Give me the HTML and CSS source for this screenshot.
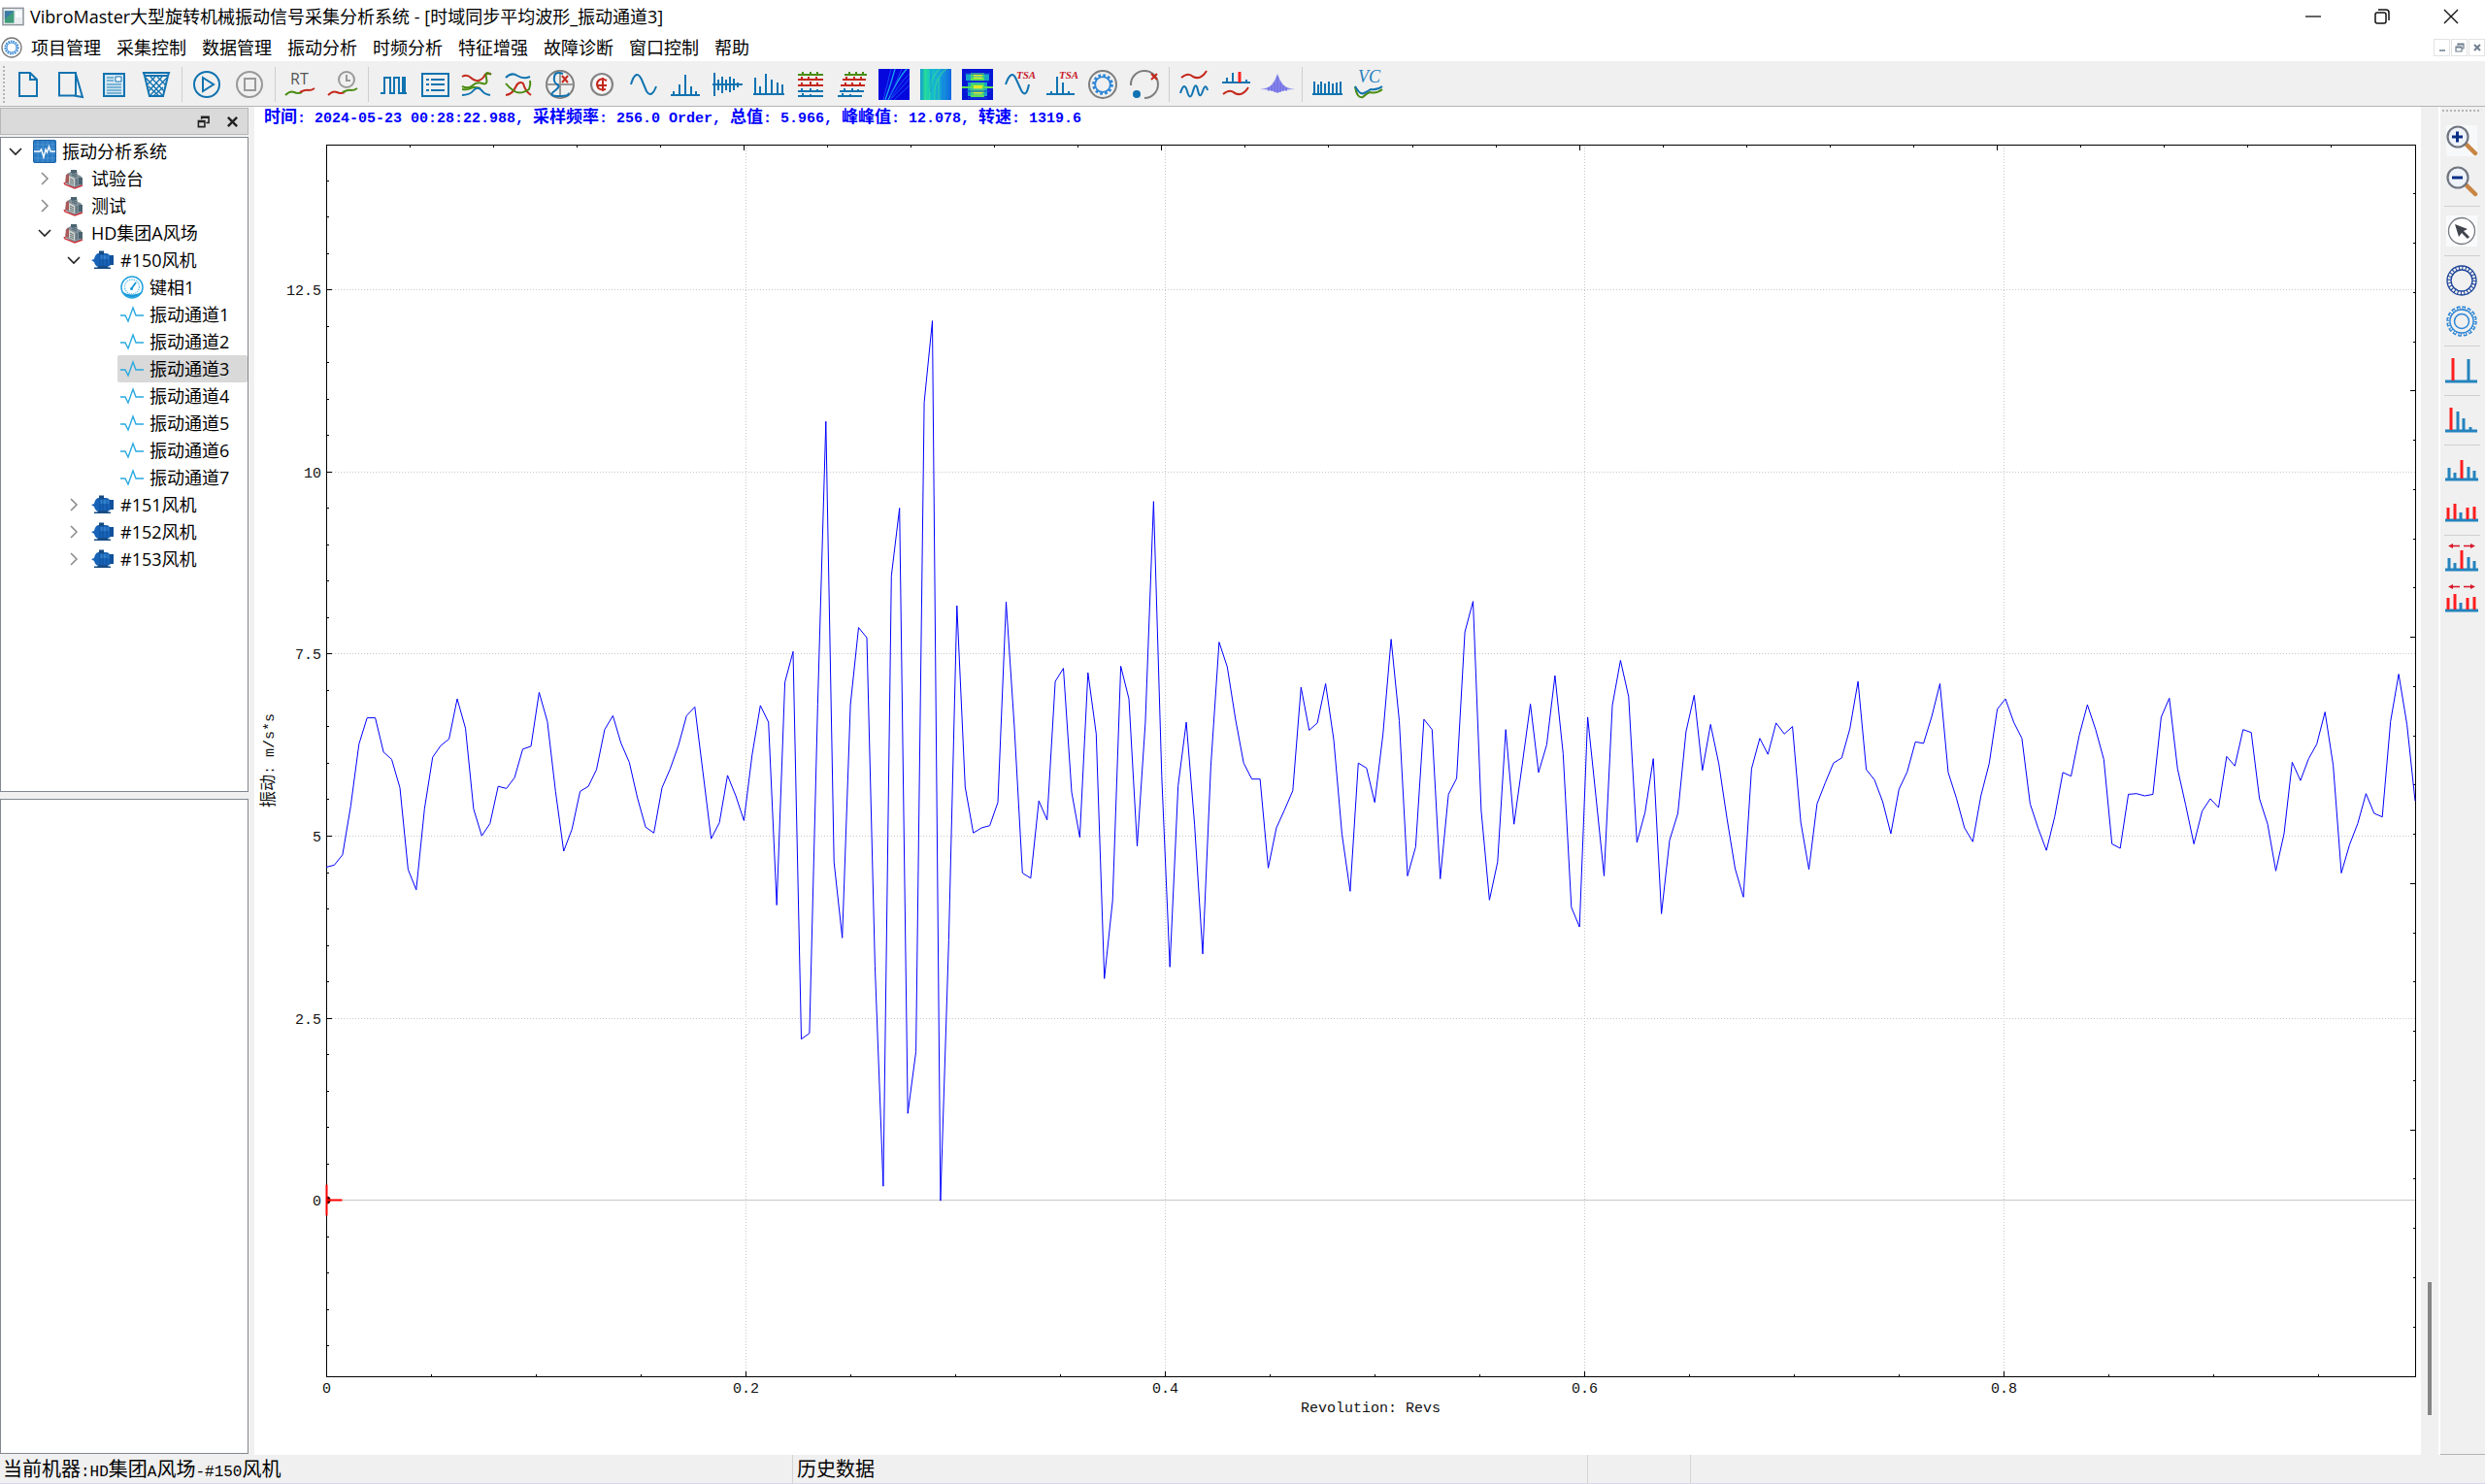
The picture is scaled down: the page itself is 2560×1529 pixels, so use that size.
FILE: index.html
```html
<!DOCTYPE html>
<html lang="zh-CN">
<head>
<meta charset="utf-8">
<title>VibroMaster大型旋转机械振动信号采集分析系统</title>
<link rel="stylesheet" href="styles.css">
</head>
<body>
<svg class="defs" aria-hidden="true">
  <symbol id="i-down" viewBox="0 0 16 16"><path d="M2 5l6 6 6-6" fill="none" stroke="#222" stroke-width="1.6"/></symbol>
  <symbol id="i-right" viewBox="0 0 16 16"><path d="M5 2l6 6-6 6" fill="none" stroke="#8a8a8a" stroke-width="1.5"/></symbol>
  <symbol id="i-system" viewBox="0 0 24 24"><rect width="24" height="24" rx="2" fill="#2b7bc4"/><path d="M0 5h24M0 9h24M0 14h24M0 19h24M5 0v24M10 0v24M15 0v24M20 0v24" stroke="#5b9fd8" stroke-width=".6"/><rect x=".5" y=".5" width="23" height="23" rx="2" fill="none" stroke="#1d62a5"/><path d="M1 12h6l1.500-2 2.500 8 2-8 1.500 3 2-6 1.500 5h5" fill="none" stroke="#fff" stroke-width="1.400"/></symbol>
  <symbol id="i-plant" viewBox="0 0 24 24"><path d="M4 13l1-6 4-2V3h6l1 5 3 1 2 3v7l-8 3-9-5z" fill="#82919a"/><path d="M9 3h6v3H9zM17 11h4v7h-4z" fill="#4b6470"/><path d="M4 8l3-1v9l-4 1z" fill="#a8595a"/><path d="M7 9l6 3v8l-6-3z" fill="#d3d4cc"/><path d="M8 12l4 2M8 14l4 2M8 16l4 2M15 12v7M18 12v6M10 6l5 2M10 8l5 2" stroke="#47606c" stroke-width=".9"/><path d="M2 16l1 2 10 4 8-3" fill="none" stroke="#c9363d" stroke-width="1.400"/></symbol>
  <symbol id="i-motor" viewBox="0 0 24 24"><path d="M0 12l3-1q1-5 4-6h8q3 0 4 2h4v10h-3q-2 2-4 2H7q-3-1-4-5z" fill="#1763b8"/><path d="M8 2.500h5V6H8zM3 19.500h17V21H3z" fill="#174c82"/><path d="M9 7h9v4H9z" fill="#3080cf"/><path d="M19 7h4v10h-4z" fill="#11509a"/><path d="M9 6v12M12 6v12M16 6v12" stroke="#0d478d" stroke-width=".7"/><path d="M6 20l2-2h8l2 2" fill="#164c86"/></symbol>
  <symbol id="i-gauge" viewBox="0 0 24 24"><circle cx="12" cy="12" r="11" fill="#fff" stroke="#22a2dd" stroke-width="1.500"/><path d="M2.500 17a11 11 0 0 0 19 0q-9.500 5-19 0z" fill="#1598d8"/><circle cx="12" cy="11.500" r="7.500" fill="none" stroke="#58bbe6" stroke-width="1.300" stroke-dasharray="1.300 1"/><path d="M16 7l-5 7" stroke="#1598d8" stroke-width="1.800"/><circle cx="11.500" cy="13.500" r="1.500" fill="#1598d8"/></symbol>
  <symbol id="i-wave" viewBox="0 0 24 24"><path d="M0 13h5l3 6 5-14 3 8h8" fill="none" stroke="#27a9e1" stroke-width="1.400"/></symbol>
  <symbol id="i-gear" viewBox="0 0 32 32"><circle cx="16" cy="16" r="12.500" fill="none" stroke="#2f86d6" stroke-width="4" stroke-dasharray="3.545 3"/><circle cx="16" cy="16" r="10.500" fill="#f0f0f0" stroke="#2f86d6" stroke-width="2.500"/></symbol>
</svg>

<header class="titlebar">
  <svg class="app-icon" viewBox="0 0 24 20"><rect x="1" y="1" width="22" height="18" fill="#e9edf0" stroke="#8a9299" stroke-width="1.500"/><path d="M3 4h10v13H3z" fill="#3f9b79"/><path d="M3 4h10l-10 9z" fill="#3c7ba7"/><path d="M15 4h3v7h-3zM19 4h2v7h-2z" fill="#fff"/></svg>
  <h1>VibroMaster大型旋转机械振动信号采集分析系统 - [时域同步平均波形_振动通道3]</h1>
  <div class="window-buttons">
    <button aria-label="最小化"><svg viewBox="0 0 16 16"><path d="M0 8h16" stroke="#111" stroke-width="1.300"/></svg></button>
    <button aria-label="还原"><svg viewBox="0 0 16 16"><rect x="1" y="4" width="11" height="11" rx="2" fill="none" stroke="#111" stroke-width="1.500"/><path d="M4 1h8q3 0 3 3v8" fill="none" stroke="#111" stroke-width="1.500"/></svg></button>
    <button aria-label="关闭"><svg viewBox="0 0 16 16"><path d="M1 1l14 14M15 1L1 15" stroke="#111" stroke-width="1.400"/></svg></button>
  </div>
</header>

<nav class="menubar">
  <svg class="menu-icon" viewBox="0 0 22 22"><circle cx="11" cy="11" r="10" fill="#fff" stroke="#777" stroke-width="1.300"/><circle cx="11" cy="11" r="6.500" fill="none" stroke="#2f86d6" stroke-width="2" stroke-dasharray="1.600 1"/><circle cx="11" cy="11" r="5" fill="none" stroke="#2f86d6"/></svg>
  <button>项目管理</button><button>采集控制</button><button>数据管理</button><button>振动分析</button><button>时频分析</button><button>特征增强</button><button>故障诊断</button><button>窗口控制</button><button>帮助</button>
  <div class="mdi-buttons">
    <button aria-label="最小化子窗口"><svg viewBox="0 0 10 10"><path d="M2 8h6" stroke="#6f7f8f" stroke-width="1.500"/></svg></button>
    <button aria-label="还原子窗口"><svg viewBox="0 0 10 10"><path d="M3 3V1h6v5H7M1 4h6v5H1zM1 5h6M3 2h6" fill="none" stroke="#6f7f8f" stroke-width="1.200"/></svg></button>
    <button aria-label="关闭子窗口"><svg viewBox="0 0 10 10"><path d="M2 2l6 6M8 2L2 8" stroke="#6f7f8f" stroke-width="2"/></svg></button>
  </div>
</nav>

<div class="toolbar" role="toolbar">
  <span class="handle"></span>
  <div class="group wide">
    <button aria-label="新建"><svg viewBox="0 0 32 32"><path class="b" d="M7 4h11l7 7v17H7zM18 4v7h7"/></svg></button>
    <button aria-label="打开"><svg viewBox="0 0 32 32"><path class="b" d="M4 4h17v23.500H4zM21 5l7 24-9-1.500"/></svg></button>
    <button aria-label="保存"><svg viewBox="0 0 32 32"><path d="M6 5h21v23H6z" fill="#d3e6f2" stroke="#1173b0" stroke-width="2"/><path d="M9 9h7M9 12h7M9 16h15M9 19h15M9 22h15M9 25h15" stroke="#5ea3cc" stroke-width="1.300"/><path d="M18 8h6v5h-6z" fill="#fff" stroke="#1173b0"/></svg></button>
    <button aria-label="删除"><svg viewBox="0 0 32 32"><path class="b" d="M3 4h26l-1 3H4zM4 7l5 21h14l5-21"/><path d="M5 9l17 18M10 8l14 15M17 8l9 9M27 9L10 27M22 8L8 23M15 8l-9 9M13 28l10-9M19 28l-11-10" stroke="#1173b0" stroke-width="1.300"/></svg></button>
  </div>
  <span class="sep"></span>
  <div class="group wide">
    <button aria-label="开始"><svg viewBox="0 0 32 32"><circle class="b" cx="16" cy="16" r="13"/><path class="b" d="M12 9l11 7-11 7z"/></svg></button>
    <button aria-label="停止"><svg viewBox="0 0 32 32"><circle class="k" cx="16" cy="16" r="13"/><path class="k" d="M11 10h11v12H11z"/></svg></button>
  </div>
  <span class="sep"></span>
  <div class="group wide">
    <button aria-label="实时"><svg viewBox="0 0 32 32"><text x="6" y="16" class="rt">RT</text><path class="g" d="M1 27q5-5 9-3 4 2 8 0"/><path class="r" d="M16 24q6-3 9-2 3 0 6-2"/></svg></button>
    <button aria-label="历史"><svg viewBox="0 0 32 32"><circle class="k" cx="20" cy="11" r="8"/><path class="k" d="M20 6v6h4"/><path class="r" d="M1 27q5-5 9-3 4 2 8 0"/><path class="g" d="M16 24q6-3 9-2 3 0 6-2"/></svg></button>
  </div>
  <span class="sep"></span>
  <div class="group">
    <button aria-label="转速脉冲"><svg viewBox="0 0 32 32"><path class="b" d="M3 25h4V9h6v16h4V9h5v16h4V9h2v16h2"/></svg></button>
    <button aria-label="数据列表"><svg viewBox="0 0 32 32"><path class="b" d="M3 5h27v23H3z"/><path class="b" d="M7 11h3M12 11h14M7 16h3M12 16h14M7 22h3M12 22h14"/></svg></button>
    <button aria-label="趋势"><svg viewBox="0 0 32 32"><path class="r" d="M1 8q5-3 9 1t8 3q5-2 6-5t7-2"/><path class="g" d="M1 18q7 3 11-1t10-2 4-6 5-3"/><path class="g" d="M1 21q6 1 9-1t10 0"/><path class="b" d="M1 27q8 0 12-5t9 1q2 3 8 4"/></svg></button>
    <button aria-label="多趋势"><svg viewBox="0 0 32 32"><path class="b" d="M3 9q6-6 12-2t13 1"/><path class="r" d="M3 27q7-1 10-8t8-4q2 8 8 12"/><path class="g" d="M3 15q3 4 9 8t15-2q2-5 1-9"/></svg></button>
    <button aria-label="轴心轨迹"><svg viewBox="0 0 32 32"><circle class="k dark" cx="16" cy="16" r="14"/><path class="k" d="M2 16h28M16 2v28"/><path class="b" d="M19 5q-8-3-9 3t3 8-3 7 5 5 9-3"/><path class="r" d="M18 7l6 7M24 7l-6 7"/></svg></button>
    <button aria-label="极坐标"><svg viewBox="0 0 32 32"><circle cx="16" cy="16" r="11" fill="#f7f7f7" stroke="#858585" stroke-width="2.200"/><path class="r" d="M21 12q-8-4-10 3 0 8 9 6M11 17h10M17 9v14"/></svg></button>
    <button aria-label="时域波形"><svg viewBox="0 0 32 32"><path class="b" d="M3 16Q8-1 14 11L19 23Q24 31 29 18"/></svg></button>
    <button aria-label="频谱"><svg viewBox="0 0 32 32"><path class="b" d="M1 27h30M4 27v-4M10 27V16M16 27V6M22 27v-9M27 27v-4"/></svg></button>
    <button aria-label="包络波形"><svg viewBox="0 0 32 32"><path class="b" d="M1 16h31M3 4v24M7 11v11M11 8v17M15 11v11M19 8v16M23 10v12M27 14v5"/></svg></button>
    <button aria-label="包络谱"><svg viewBox="0 0 32 32"><path class="b" d="M0 26h32M2 26V9M7 26v-8M13 26V5M19 26V11M25 26V14M30 26V16"/></svg></button>
    <button aria-label="瀑布图"><svg viewBox="0 0 32 32"><path class="g" d="M3 6h26M8 6V3M16 6V3M23 6V3"/><path class="r" d="M3 11h26M7 11V8M14 11V8M22 11V8M3 17h26M7 17v-3M16 17v-4M23 17v-3"/><path class="b" d="M3 23h26M7 23v-3M16 23v-3M23 23v-2M3 28h26M8 28v-3M16 28v-2"/></svg></button>
    <button aria-label="级联图"><svg viewBox="0 0 32 32"><path class="g" d="M8 6h23M13 6V3M20 6V3M27 6V3"/><path class="r" d="M6 11h24M10 11V8M18 11V8M25 11V8M4 17h25M9 17v-3M16 17v-3M24 17v-3"/><path class="b" d="M3 23h25M8 23v-3M16 23v-3M22 23v-2M1 28h25M6 28v-3M14 28v-2"/></svg></button>
    <button aria-label="时频图"><svg viewBox="0 0 32 32"><path fill="#0507dc" d="M0 0h32v32H0z"/><path d="M7 32Q13 15 17 0M10 32Q20 10 29 0" stroke="#16aef2" stroke-width="1.200" fill="none"/><path d="M5 32L13 0M12 28L24 0M14 30L32 10M16 32L32 17M12 32Q22 14 32 5" stroke="#164df5" fill="none"/></svg></button>
    <button aria-label="小波时频图"><svg viewBox="0 0 32 32"><defs><linearGradient id="heat"><stop stop-color="#139bd0"/><stop offset=".18" stop-color="#22d9a0"/><stop offset=".36" stop-color="#15bfc9"/><stop offset=".65" stop-color="#17a1d9"/><stop offset="1" stop-color="#1068df"/></linearGradient></defs><path fill="url(#heat)" d="M0 0h32v32H0z"/><path d="M5 0v32M15 32Q13 10 27 0M9 32Q10 8 20 0M19 32V8" stroke="#3ce58c" stroke-width="1.200" fill="none" opacity=".6"/><path d="M11 0v24M23 8v24M29 6v26" stroke="#1079e8" opacity=".6"/></svg></button>
    <button aria-label="阶次时频图"><svg viewBox="0 0 32 32"><path fill="#0716d5" d="M0 0h32v32H0z"/><path fill="#17a3c7" d="M4 5h24v7H4zM6 14h20v14H6z"/><path fill="#5add58" d="M9 4h14v8H9zM9 14h14v15H9zM0 18h32v2H0z"/><path fill="#e3ea25" d="M12 6h9v4h-9zM12 17h9v4h-9zM12 24h9v3h-9z"/><path d="M3 5h26M5 13h23M4 23h25M6 30h20" stroke="#1546dd"/><path d="M7 8h19M8 15h17M7 21h18M9 26h14" stroke="#18b4c6"/></svg></button>
    <button aria-label="时域同步平均波形"><svg viewBox="0 0 32 32"><path class="b" d="M2 16Q8-1 13 11L18 22Q23 31 26 16"/><text x="13" y="10" class="tsa">TSA</text></svg></button>
    <button aria-label="时域同步平均频谱"><svg viewBox="0 0 32 32"><path class="b" d="M1 26h29M6 26v-3M12 26V8M18 26V14M24 26v-3"/><text x="14" y="10" class="tsa">TSA</text></svg></button>
    <button aria-label="齿轮诊断"><svg viewBox="0 0 32 32"><circle class="k dark" cx="16" cy="16" r="14"/><use href="#i-gear" x="4" y="4" width="24" height="24"/></svg></button>
    <button aria-label="轴承诊断"><svg viewBox="0 0 32 32"><path class="k dark" d="M2 17A14 14 0 1 1 16 30"/><circle cx="8" cy="26" r="4" fill="#1173b0"/><path class="r" d="M23 5l6 6M29 5l-6 6"/></svg></button>
  </div>
  <span class="sep"></span>
  <div class="group">
    <button aria-label="相关分析"><svg viewBox="0 0 32 32"><path class="r" d="M3 9q7-6 12-1 8 4 14-6"/><path class="b" d="M2 25Q6 12 9 23T15 23 20 22 25 23 30 22"/></svg></button>
    <button aria-label="倒频谱"><svg viewBox="0 0 32 32"><path class="b" d="M2 14h29M7 14V9M13 14V4M27 14v-3"/><path d="M20 14V3" stroke="#f22" stroke-width="3"/><path class="r" d="M3 26q7-6 12-1 8 4 14-6"/></svg></button>
    <button aria-label="概率密度"><svg viewBox="0 0 32 32"><path d="M-2 21q10-1 13-6 3-4 5-10 2 6 5 10 3 5 13 6-12 0-18 4-6-4-18-4z" fill="#8a89ea"/><path d="M7 19v4M10 17v6M13 14v10M16 8v16M19 14v10M22 17v6M25 19v4" stroke="#6463e2"/></svg></button>
  </div>
  <span class="sep"></span>
  <div class="group">
    <button aria-label="倍频程"><svg viewBox="0 0 32 32"><path class="b" d="M1 26h31M3 26V13M7 26V16M10 26V13M14 26V15M18 26V13M22 26V15M26 26V14M30 26V13"/></svg></button>
    <button aria-label="振动标准"><svg viewBox="0 0 32 32"><text x="5" y="14" class="vc">VC</text><path class="g" d="M2 18q2 13 8 11 4-4 7-5 7 2 13-3"/><path class="b" d="M2 18q5 9 9 7t7-4q7 1 12-3"/></svg></button>
  </div>
</div>

<main class="workspace">
  <aside class="sidebar">
    <div class="dock-title">
      <button aria-label="浮动"><svg viewBox="0 0 14 14"><path d="M5 4V1.500h8V8h-3M1.500 6h7v6.500h-7zM1.500 7h7M5 2.500h8" fill="none" stroke="#222" stroke-width="1.700"/></svg></button>
      <button aria-label="关闭面板"><svg viewBox="0 0 14 14"><path d="M2 2l10 10M12 2L2 12" stroke="#222" stroke-width="2.600"/></svg></button>
    </div>
    <div class="panel">
      <ul class="tree" role="tree">
        <li><div class="row"><svg class="chev"><use href="#i-down"/></svg><span class="label"><svg><use href="#i-system"/></svg>振动分析系统</span></div>
          <ul>
            <li><div class="row"><svg class="chev"><use href="#i-right"/></svg><span class="label"><svg><use href="#i-plant"/></svg>试验台</span></div></li>
            <li><div class="row"><svg class="chev"><use href="#i-right"/></svg><span class="label"><svg><use href="#i-plant"/></svg>测试</span></div></li>
            <li><div class="row"><svg class="chev"><use href="#i-down"/></svg><span class="label"><svg><use href="#i-plant"/></svg>HD集团A风场</span></div>
              <ul>
                <li><div class="row"><svg class="chev"><use href="#i-down"/></svg><span class="label"><svg><use href="#i-motor"/></svg>#150风机</span></div>
                  <ul>
                    <li><div class="row leaf"><span class="label"><svg><use href="#i-gauge"/></svg>键相1</span></div></li>
                    <li><div class="row leaf"><span class="label"><svg><use href="#i-wave"/></svg>振动通道1</span></div></li>
                    <li><div class="row leaf"><span class="label"><svg><use href="#i-wave"/></svg>振动通道2</span></div></li>
                    <li><div class="row leaf"><span class="label selected"><svg><use href="#i-wave"/></svg>振动通道3</span></div></li>
                    <li><div class="row leaf"><span class="label"><svg><use href="#i-wave"/></svg>振动通道4</span></div></li>
                    <li><div class="row leaf"><span class="label"><svg><use href="#i-wave"/></svg>振动通道5</span></div></li>
                    <li><div class="row leaf"><span class="label"><svg><use href="#i-wave"/></svg>振动通道6</span></div></li>
                    <li><div class="row leaf"><span class="label"><svg><use href="#i-wave"/></svg>振动通道7</span></div></li>
                  </ul>
                </li>
                <li><div class="row"><svg class="chev"><use href="#i-right"/></svg><span class="label"><svg><use href="#i-motor"/></svg>#151风机</span></div></li>
                <li><div class="row"><svg class="chev"><use href="#i-right"/></svg><span class="label"><svg><use href="#i-motor"/></svg>#152风机</span></div></li>
                <li><div class="row"><svg class="chev"><use href="#i-right"/></svg><span class="label"><svg><use href="#i-motor"/></svg>#153风机</span></div></li>
              </ul>
            </li>
          </ul>
        </li>
      </ul>
    </div>
    <div class="panel"></div>
  </aside>

  <section class="chart">
    <p class="readout"><span class="cn">时间</span>: 2024-05-23 00:28:22.988, <span class="cn">采样频率</span>: 256.0 Order, <span class="cn">总值</span>: 5.966, <span class="cn">峰峰值</span>: 12.078, <span class="cn">转速</span>: 1319.6</p>
    <div class="plot"><svg id="plot"></svg></div>
  </section>

  <div class="gutter"><span class="thumb"></span></div>

  <div class="side-tools" role="toolbar">
    <span class="handle-h"></span>
    <button aria-label="放大"><svg viewBox="0 0 32 32"><path fill="#f7f8fa" d="M0 0h32v32H0z"/><path d="M21 20l9 9" stroke="#c98544" stroke-width="4.500" stroke-linecap="round"/><circle cx="12" cy="12" r="10.500" fill="#eef3fa" stroke="#70757f" stroke-width="2.200"/><path d="M6 12h11M11.500 6.500v11" stroke="#062f86" stroke-width="3"/></svg></button>
    <button aria-label="缩小"><svg viewBox="0 0 32 32"><path d="M21 20l9 9" stroke="#c98544" stroke-width="4.500" stroke-linecap="round"/><circle cx="12" cy="12" r="10.500" fill="#eef3fa" stroke="#70757f" stroke-width="2.200"/><path d="M6 12h11" stroke="#062f86" stroke-width="3"/></svg></button>
    <span class="sep-h"></span>
    <button aria-label="选择"><svg viewBox="0 0 32 32"><path fill="#f9fafc" d="M0 0h32v32H0z"/><circle cx="16" cy="16" r="13.500" fill="#fff" stroke="#777a80" stroke-width="1.300"/><path d="M9 9l13 5-4 2 6 6-2 2-6-6-3 4z" fill="#3f444c"/></svg></button>
    <span class="sep-h"></span>
    <button aria-label="轴承游标"><svg viewBox="0 0 32 32"><circle cx="16" cy="16" r="15" fill="none" stroke="#1b4398" stroke-width="1.300"/><circle cx="16" cy="16" r="11" fill="none" stroke="#1b4398" stroke-width="1.300"/><circle cx="16" cy="16" r="13" fill="none" stroke="#1b4398" stroke-width="4" stroke-dasharray="1 2.403"/></svg></button>
    <button aria-label="齿轮游标"><svg viewBox="0 0 32 32"><circle cx="16" cy="16" r="14" fill="none" stroke="#2b85d4" stroke-width="3.500" stroke-dasharray="3.500 1.998"/><circle cx="16" cy="16" r="13.300" fill="none" stroke="#f0f0f0" stroke-width="2" stroke-dasharray="1.500 3.723" stroke-dashoffset="-1"/><circle cx="16" cy="16" r="12" fill="#f0f0f0" stroke="#2b85d4" stroke-width="1.300"/><circle cx="16" cy="16" r="7.500" fill="none" stroke="#2b85d4" stroke-width="1.500"/></svg></button>
    <span class="sep-h"></span>
    <button aria-label="单游标"><svg viewBox="0 0 32 32"><path class="s" d="M-1 27h33M23 27V4"/><path class="h" d="M7 26V3"/></svg></button>
    <span class="sep-h"></span>
    <button aria-label="谐波游标"><svg viewBox="0 0 32 32"><path class="s" d="M-1 27h33M12 27V7M18 27V14M25 27v-4"/><path class="h" d="M5 26V3"/></svg></button>
    <span class="sep-h"></span>
    <button aria-label="边带游标"><svg viewBox="0 0 32 32"><path class="s" d="M-1 26h34M3 26V14M9 26v-7M23 26V13M29 26V17"/><path class="h" d="M16 25V6"/></svg></button>
    <button aria-label="边带组游标"><svg viewBox="0 0 32 32"><path class="s" d="M-1 26h34M15 26v-8"/><path class="h" d="M2 25V13M9 25V9M22 25V13M29 25V12"/></svg></button>
    <span class="sep-h"></span>
    <button aria-label="移动边带"><svg viewBox="0 0 32 32"><path class="s" d="M-1 26h34M3 26V14M9 26v-7M23 26V13M29 26V17"/><path class="h" d="M16 25V6"/><path d="M2 1.500l5-2.500v1.700h7v1.600H7V4zM30 1.500L25-1v1.700h-7v1.600h7V4z" fill="#d8172a"/></svg></button>
    <button aria-label="移动边带组"><svg viewBox="0 0 32 32"><path class="s" d="M-1 26h34M15 26v-8"/><path class="h" d="M2 25V13M9 25V9M22 25V13M29 25V12"/><path d="M2 1.500l5-2.500v1.700h7v1.600H7V4zM30 1.500L25-1v1.700h-7v1.600h7V4z" fill="#d8172a"/></svg></button>
  </div>
</main>

<footer class="statusbar">
  <span class="machine"><span class="cn">当前机器</span>:HD<span class="cn">集团</span>A<span class="cn">风场</span>-#150<span class="cn">风机</span></span>
  <span class="source"><span class="cn">历史数据</span></span>
  <span class="cell"></span>
  <span class="cell"></span>
</footer>
<script src="chart.js"></script>
</body>
</html>
```

FILE: styles.css
```css
* { box-sizing: border-box; }

body {
  margin: 0;
  height: 100vh;
  display: flex;
  flex-direction: column;
  background: #f0f0f0;
  color: #000;
  font: 18px/28px "Open Sans", "Noto Sans CJK SC", sans-serif;
  overflow: hidden;
}

button {
  padding: 0;
  border: 0;
  background: none;
  color: inherit;
  font: inherit;
  display: flex;
  align-items: center;
  justify-content: center;
}

ul { list-style: none; margin: 0; padding: 0; }

.defs { display: none; }

/* title bar */
.titlebar {
  flex: none;
  height: 34px;
  display: flex;
  align-items: center;
  background: #fff;
  padding-left: 2px;
}
.app-icon { width: 23px; height: 20px; margin-right: 6px; }
.titlebar h1 {
  flex: 1;
  margin: 0;
  font-size: 18px;
  font-weight: 400;
  white-space: nowrap;
}
.window-buttons { display: flex; }
.window-buttons button { width: 71px; height: 34px; }
.window-buttons svg { width: 16px; height: 16px; }

/* menu bar */
.menubar {
  flex: none;
  height: 29px;
  display: flex;
  align-items: center;
  gap: 16px;
  background: #fff;
  padding-left: 1px;
}
.menu-icon { width: 22px; height: 22px; margin-right: -7px; }
.mdi-buttons { margin-left: auto; display: flex; gap: 1px; }
.mdi-buttons button {
  width: 17px;
  height: 18px;
  border: 1px solid #e2e2e2;
}
.mdi-buttons svg { width: 10px; height: 10px; }

/* main toolbar */
.toolbar {
  flex: none;
  height: 47px;
  display: flex;
  align-items: center;
  padding-top: 2px;
  border-bottom: 1px solid #b4b4b4;
}
.handle {
  width: 2px;
  height: 38px;
  margin: 0 2px 0 3px;
  background: repeating-linear-gradient(#b4b4b4 0 2px, transparent 2px 4px);
}
.group { display: flex; }
.group button { width: 43px; height: 42px; }
.group.wide button { width: 44px; }
.group svg, .side-tools svg { width: 32px; height: 32px; overflow: visible; }
.sep {
  width: 8px;
  height: 36px;
  background: linear-gradient(#cfcfcf, #cfcfcf) center / 1px 100% no-repeat;
}

.b, .r, .g, .k { fill: none; stroke-width: 2; }
.b { stroke: #1173b0; }
.r { stroke: #c5281c; }
.g { stroke: #4a8c12; }
.k { stroke: #999; }
.k.dark { stroke: #7d7d7d; }
.s { fill: none; stroke: #2583bd; stroke-width: 3; }
.h { fill: none; stroke: #ff1e1e; stroke-width: 3; }
.rt { font: 16px "Open Sans", sans-serif; fill: #555; }
.tsa { font: italic bold 11px "Liberation Serif", serif; fill: #c8202c; }
.vc { font: italic 18px "Liberation Serif", serif; fill: #1f80bd; }

/* workspace */
.workspace { flex: 1; min-height: 0; display: flex; }

.sidebar {
  flex: none;
  width: 256px;
  margin-right: 6px;
  padding: 1px 0 1px;
  display: flex;
  flex-direction: column;
}
.dock-title {
  flex: none;
  height: 28px;
  margin-bottom: 2px;
  padding-right: 8px;
  display: flex;
  justify-content: flex-end;
  gap: 14px;
  background: #dadada;
  border: 1px solid #b7b7b7;
}
.dock-title button { width: 16px; }
.dock-title svg { width: 13px; height: 13px; }
.panel {
  flex: 1;
  min-height: 0;
  background: #fff;
  border: 1px solid #828790;
}
.panel + .panel { margin-top: 7px; }

.tree ul { padding-left: 30px; }
.row { display: flex; align-items: center; height: 28px; }
.row.leaf { padding-left: 30px; }
.chev { width: 16px; height: 16px; margin: 0 7px; }
.label {
  flex: 1;
  display: flex;
  align-items: center;
  gap: 6px;
  height: 28px;
  padding-left: 3px;
  white-space: nowrap;
}
.label svg { flex: none; width: 24px; height: 24px; }
.label.selected { background: #d9d9d9; border-radius: 2px; }

/* chart */
.chart {
  flex: 1;
  min-width: 0;
  display: flex;
  flex-direction: column;
  background: #fff;
}
.readout {
  flex: none;
  height: 24px;
  margin: 0;
  padding-left: 10px;
  white-space: nowrap;
  color: #00f;
  font: bold 15px/24px "Liberation Mono", "Noto Sans CJK SC", monospace;
}
.readout .cn { font-size: 17px; }
.plot { flex: 1; min-height: 0; }
.plot svg { display: block; width: 100%; height: 100%; }
.plot text { font: 15px "Liberation Mono", "Noto Sans CJK SC", monospace; fill: #111; }
.plot .cn { font-size: 17px; }
.axis { fill: none; stroke: #000; shape-rendering: crispEdges; }
.grid { fill: none; stroke: #c8c8c8; stroke-dasharray: 1 2; shape-rendering: crispEdges; }
.zero { stroke: #c8c8c8; shape-rendering: crispEdges; }
.trace { fill: none; stroke: #00f; stroke-width: 1; }
.cursor { fill: none; stroke: #f00; stroke-width: 2; }

.gutter {
  flex: none;
  width: 20px;
  display: flex;
  flex-direction: column;
  justify-content: flex-end;
  padding: 0 0 41px 7px;
  border-right: 2px solid #fff;
}
.thumb { width: 4px; height: 137px; background: #858585; }

.side-tools {
  flex: none;
  width: 46px;
  display: flex;
  flex-direction: column;
  align-items: center;
  padding: 3px 2px 0 0;
  border-bottom: 1px solid #b4b4b4;
}
.side-tools button { width: 42px; height: 42px; }
.handle-h {
  width: 40px;
  height: 2px;
  margin-bottom: 9px;
  background: repeating-linear-gradient(90deg, #b4b4b4 0 2px, transparent 2px 4px);
}
.sep-h {
  width: 37px;
  height: 9px;
  background: linear-gradient(#cfcfcf, #cfcfcf) center / 100% 1px no-repeat;
}

/* status bar */
.statusbar {
  flex: none;
  height: 30px;
  display: grid;
  grid-template-columns: 816fr 819fr 106fr 819fr;
  border-bottom: 1px solid #d9d6ea;
  font: 16px/28px "Liberation Mono", "Noto Sans CJK SC", monospace;
}
.statusbar .cn { font-size: 20px; }
.statusbar > span { padding-top: 3px; }
.machine { padding-left: 3px; }
.source, .cell { padding-left: 4px; border-left: 1px solid #d4d4d4; }
```

FILE: chart.js
```js
// Synchronous average over one revolution, 256 samples, m/s*s.
const samples = [
  4.58, 4.61, 4.75, 5.42, 6.27, 6.63, 6.63, 6.16, 6.06, 5.67, 4.55, 4.27, 5.38, 6.09, 6.25, 6.34,
  6.89, 6.49, 5.38, 5.01, 5.18, 5.69, 5.66, 5.81, 6.20, 6.24, 6.98, 6.58, 5.62, 4.80, 5.10, 5.62,
  5.69, 5.92, 6.47, 6.66, 6.28, 6.02, 5.53, 5.13, 5.05, 5.67, 5.93, 6.25, 6.66, 6.78, 5.88, 4.97,
  5.19, 5.84, 5.56, 5.22, 6.12, 6.80, 6.57, 4.06, 7.12, 7.54, 2.22, 2.30, 6.82, 10.70, 4.65, 3.61,
  6.81, 7.87, 7.73, 3.22, 0.20, 8.58, 9.51, 1.20, 2.05, 10.96, 12.08, 0.00, 3.58, 8.17, 5.68, 5.05,
  5.12, 5.15, 5.47, 8.22, 6.52, 4.50, 4.43, 5.49, 5.23, 7.13, 7.31, 5.61, 4.99, 7.25, 6.41, 3.05,
  4.12, 7.34, 6.89, 4.87, 6.56, 9.60, 5.83, 3.21, 5.70, 6.57, 5.17, 3.39, 5.97, 7.67, 7.33, 6.61,
  6.01, 5.79, 5.79, 4.57, 5.12, 5.37, 5.63, 7.05, 6.46, 6.56, 7.10, 6.33, 5.03, 4.25, 6.01, 5.94,
  5.47, 6.40, 7.71, 6.59, 4.46, 4.86, 6.61, 6.47, 4.42, 5.58, 5.80, 7.81, 8.23, 5.36, 4.13, 4.65,
  6.47, 5.17, 5.98, 6.82, 5.88, 6.26, 7.21, 6.14, 4.03, 3.76, 6.64, 5.55, 4.46, 6.80, 7.42, 6.92,
  4.92, 5.33, 6.07, 3.94, 4.95, 5.32, 6.44, 6.94, 5.91, 6.54, 6.00, 5.25, 4.56, 4.17, 5.93, 6.35,
  6.13, 6.56, 6.41, 6.51, 5.20, 4.55, 5.45, 5.74, 6.01, 6.08, 6.48, 7.13, 5.92, 5.78, 5.48, 5.04,
  5.65, 5.89, 6.30, 6.28, 6.65, 7.10, 5.88, 5.53, 5.12, 4.93, 5.56, 6.00, 6.75, 6.89, 6.57, 6.35,
  5.45, 5.11, 4.81, 5.27, 5.88, 5.83, 6.39, 6.81, 6.47, 6.06, 4.90, 4.84, 5.58, 5.59, 5.56, 5.58,
  6.64, 6.90, 5.93, 5.43, 4.90, 5.35, 5.52, 5.40, 6.10, 5.97, 6.47, 6.43, 5.52, 5.17, 4.53, 5.04,
  6.02, 5.77, 6.07, 6.27, 6.71, 5.98, 4.50, 4.89, 5.18, 5.59, 5.32, 5.27, 6.58, 7.23, 6.54, 5.49
];

const svg = document.getElementById('plot');
const margin = { left: 74, right: 6, top: 15, bottom: 81 };
const yMin = -2.415, yMax = 14.493, xMax = 255 / 256;

function draw() {
  const w = svg.clientWidth, h = svg.clientHeight;
  const L = margin.left, R = w - margin.right, T = margin.top, B = h - margin.bottom;
  const px = v => L + v / xMax * (R - L);
  const py = v => B - (v - yMin) / (yMax - yMin) * (B - T);
  const snap = v => Math.floor(v) + 0.5;
  let axis = `M${L + .5} ${T + .5}H${R + .5}V${B + .5}H${L + .5}Z`;
  let grid = '', text = '';

  for (let i = -4; i <= 28; i++) {
    const v = i / 2, y = snap(py(v)), major = i % 5 === 0;
    axis += `M${L} ${y}h${major ? 6 : 3}`;
    if (major) {
      if (i) grid += `M${L} ${y}H${R}`;
      text += `<text x="${L - 5}" y="${y + 5}" text-anchor="end">${v}</text>`;
    }
  }
  for (let i = 0; i < 20; i++) {
    const x = snap(px(i / 20)), major = i % 4 === 0;
    axis += `M${x} ${B}v${major ? -5 : -2}`;
    if (major) {
      if (i) grid += `M${x} ${T}V${B}`;
      text += `<text x="${x}" y="${B + 17}" text-anchor="middle">${i / 20}</text>`;
    }
  }
  // top and right axes keep their own 0-5 scale
  for (let i = 1; i < 25; i++) {
    const len = i % 5 === 0 ? 5 : 2;
    axis += `M${snap(L + (R - L) * i / 25)} ${T}v${len + 1}`;
    axis += `M${R} ${snap(T + (B - T) * i / 25)}h${-len}`;
  }

  const y0 = snap(py(0)), x0 = L + .5, mid = (T + B) / 2;
  const line = samples.map((v, i) => `${px(i / 256).toFixed(1)},${(py(v) + .5).toFixed(1)}`).join(' ');
  svg.innerHTML =
    `<path class="grid" d="${grid}"/>` +
    `<path class="zero" d="M${L} ${y0}H${R}"/>` +
    `<path class="axis" d="${axis}"/>` +
    `<polyline class="trace" points="${line}"/>` +
    `<path d="M${x0} ${y0 - 4}a4 4 0 0 1 0 8z" fill="#300"/>` +
    `<path class="cursor" d="M${x0} ${y0 - 16}v32M${x0} ${y0}h16"/>` +
    text +
    `<text x="${(L + R) / 2}" y="${B + 37}" text-anchor="middle">Revolution: Revs</text>` +
    `<text transform="translate(20 ${mid}) rotate(-90)" text-anchor="middle"><tspan class="cn">振动</tspan>: m/s*s</text>`;
}

draw();
window.addEventListener('resize', draw);
```
